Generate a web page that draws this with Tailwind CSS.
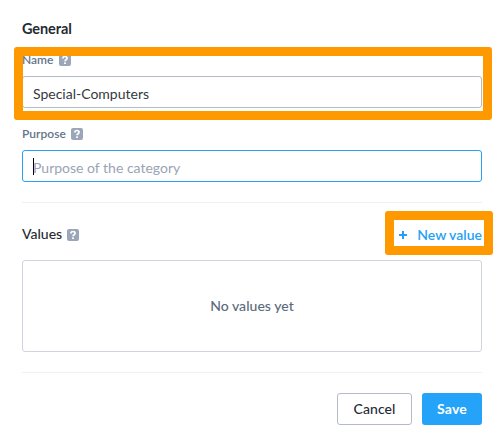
<!DOCTYPE html>
<html lang="en">
<head>
<meta charset="utf-8">
<title>Category</title>
<script src="https://cdn.jsdelivr.net/npm/@tailwindcss/browser@4"></script>
</head>
<body class="bg-white">
<main class="relative flex h-[442px] w-[498px] flex-col overflow-hidden pl-[22px] pr-4 pt-[19px] font-['Lato',sans-serif] text-sm text-[#252b33]">
  <h2 class="h-5 text-[14.5px] leading-5 font-bold tracking-[-0.1px]"><span>General</span></h2>

  <label class="mt-[13px] flex h-4 items-center gap-[6px] text-xs font-semibold text-[#64748a]">
    <span>Name</span>
    <svg class="size-3" viewBox="0 0 12 12" fill="none"><rect width="12" height="12" rx="2" fill="#9ba6b8"/><path d="M3.9 4.5C3.9 1.9 8.1 1.9 8.1 4.3C8.1 5.7 6 5.7 6 7.3" stroke="#fff" stroke-width="1.7"/><rect x="5.1" y="8.3" width="1.8" height="1.7" fill="#fff"/></svg>
  </label>
  <div class="mt-2 flex h-8 items-center rounded-[3px] border border-[#b5bac9] px-[10px] pt-[3px] text-[#343941]"><span>Special-Computers</span></div>

  <label class="mt-[18px] flex h-4 items-center gap-[5px] text-xs font-semibold text-[#64748a]">
    <span class="tracking-[0.03px]">Purpose</span>
    <svg class="size-3" viewBox="0 0 12 12" fill="none"><rect width="12" height="12" rx="2" fill="#9ba6b8"/><path d="M3.9 4.5C3.9 1.9 8.1 1.9 8.1 4.3C8.1 5.7 6 5.7 6 7.3" stroke="#fff" stroke-width="1.7"/><rect x="5.1" y="8.3" width="1.8" height="1.7" fill="#fff"/></svg>
  </label>
  <div class="mt-2 flex h-8 items-center rounded-[3px] border border-[#26a2f0] px-[10px] text-[#9ba3b4]"><i class="-mr-px h-[17px] w-px bg-black"></i><span class="pt-[3px]">Purpose of the category</span></div>

  <hr class="mt-5 h-px border-0 bg-[#f0f1f3]">

  <div class="mt-[21px] flex h-[22px] items-center justify-between">
    <div class="flex items-center gap-[5px] font-medium"><span class="-mt-0.5">Values</span>
      <svg class="size-3" viewBox="0 0 12 12" fill="none"><rect width="12" height="12" rx="2" fill="#9ba6b8"/><path d="M3.9 4.5C3.9 1.9 8.1 1.9 8.1 4.3C8.1 5.7 6 5.7 6 7.3" stroke="#fff" stroke-width="1.7"/><rect x="5.1" y="8.3" width="1.8" height="1.7" fill="#fff"/></svg>
    </div>
    <div class="flex items-center gap-[10px] font-semibold text-[#26a2f5]">
      <svg class="size-2" viewBox="0 0 8 8" stroke="#26a2f5" stroke-width="2"><path d="M0 4H8M4 0V8"/></svg><span>New value</span>
    </div>
  </div>

  <section class="mt-3.5 flex h-[92px] items-center justify-center rounded-[3px] border border-[#d0d4dc] font-medium text-[#5b6b7c]"><span class="tracking-[0.05px]">No values yet</span></section>

  <hr class="mt-5 h-px border-0 bg-[#f0f1f3]">

  <div class="mt-5 flex h-8 justify-end gap-[10px]">
    <button class="flex w-[75px] items-center justify-center rounded-[3px] border border-[#b5bac9] font-medium"><span class="tracking-[0.1px]">Cancel</span></button>
    <button class="flex w-[60px] items-center justify-center rounded-[3px] bg-[#24a3f8] font-bold text-white"><span class="tracking-[0.15px]">Save</span></button>
  </div>

  <div class="absolute left-[14px] top-[47px] h-[73px] w-[478px] rounded-[3px] border-9 border-[#ff9900]"></div>
  <div class="absolute left-[385px] top-[211px] h-11 w-[108px] rounded-[3px] border-9 border-[#ff9900]"></div>
</main>
</body>
</html>
